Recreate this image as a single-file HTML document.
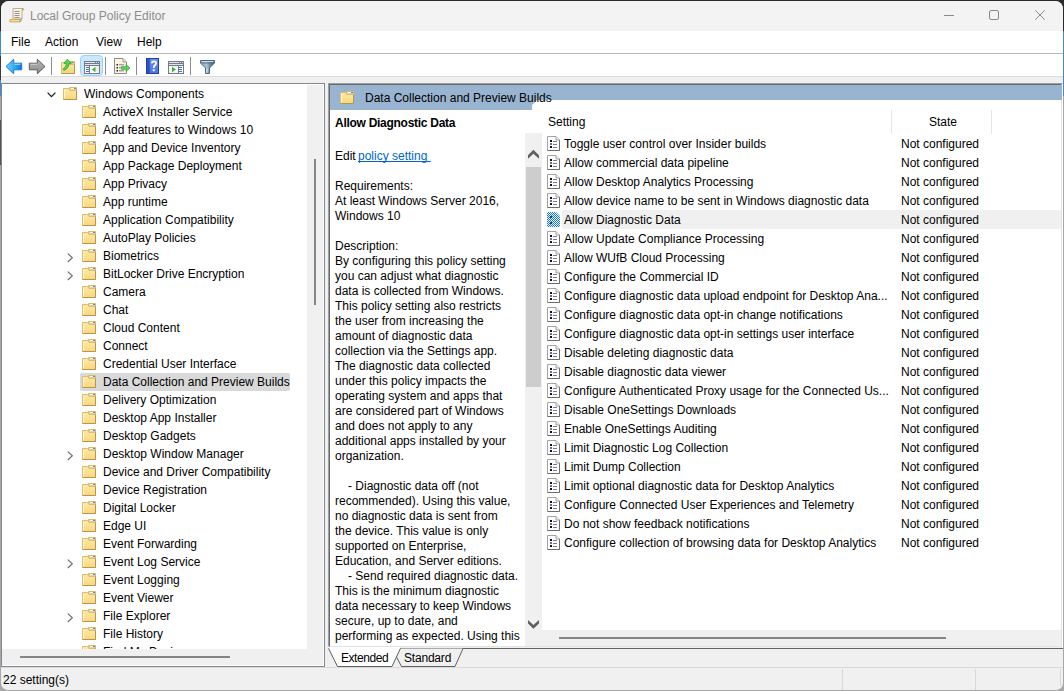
<!DOCTYPE html>
<html><head><meta charset="utf-8"><style>
*{margin:0;padding:0;box-sizing:border-box}
html,body{width:1064px;height:691px;overflow:hidden;background:#a8a8a8}
body{position:relative;font-family:"Liberation Sans",sans-serif;font-size:12px;color:#000}
.a{position:absolute}
.ic{position:absolute;display:block}
.ic svg{display:block}
.t{position:absolute;white-space:pre;line-height:18px;height:18px}
.sel{position:absolute;background:#d9d9d9;border-radius:2px}
.hl{position:absolute;background:#f0f0f0}
#win{position:absolute;left:1px;top:1px;width:1062px;height:689px;background:#f0f0f0;border-radius:8px 8px 7px 7px}
</style></head><body>
<div class="a" style="left:0;top:0;width:1064px;height:31px;background:#2b2b2b"></div>
<div class="a" style="left:0;top:31px;width:1px;height:25px;background:#3d8ad6"></div>
<div class="a" style="left:0;top:56px;width:1px;height:24px;background:#3a3a3a"></div>
<div class="a" style="left:0;top:80px;width:1px;height:16px;background:#3d8ad6"></div>
<div class="a" style="left:0;top:120px;width:1px;height:45px;background:#555"></div>
<div class="a" style="left:1063px;top:31px;width:1px;height:65px;background:#3d8ad6"></div>
<div id="win">
</div>
<!-- title bar -->
<div class="a" style="left:1px;top:1px;width:1062px;height:30px;background:#f3f3f3;border-radius:8px 8px 0 0"></div>
<div class="ic" style="left:9px;top:7px"><svg width="16" height="16" viewBox="0 0 16 16"><path d="M4 1.5H14L13 3V12H4Z" fill="#fdf3cf" stroke="#b8b0a0"/><path d="M13 1.5Q15 1.5 15 2.5Q14.5 3.5 13 3" fill="#e0b85a" stroke="#b89040" stroke-width="0.6"/><rect x="5.5" y="4" width="5" height="1" fill="#8f8fb0"/><rect x="5.5" y="6" width="5" height="1" fill="#8f8fb0"/><rect x="5.5" y="8" width="5" height="1" fill="#8f8fb0"/><rect x="5.5" y="10" width="5" height="1" fill="#8f8fb0"/><path d="M1 12.5H11V15H1Q0.3 13.7 1 12.5Z" fill="#f3d98a" stroke="#c9a55a" stroke-width="0.8"/><path d="M11 12.5Q12 12 12.5 11.5L12.5 13.5L11 15Z" fill="#c8c8d8" stroke="#9090a8" stroke-width="0.6"/></svg></div>
<div class="t" style="left:30px;top:7px;color:#8c8c8c">Local Group Policy Editor</div>
<div class="a" style="left:944px;top:15px;width:10px;height:1px;background:#8a8a8a"></div>
<div class="a" style="left:989px;top:10px;width:10px;height:10px;border:1px solid #8a8a8a;border-radius:2px"></div>
<svg class="ic" style="left:1035px;top:10px" width="10" height="10" viewBox="0 0 10 10"><path d="M0.3 0.3L9.7 9.7M9.7 0.3L0.3 9.7" stroke="#8a8a8a" stroke-width="1"/></svg>
<!-- menu bar -->
<div class="a" style="left:1px;top:31px;width:1062px;height:22px;background:#fff"></div>
<div class="a" style="left:1px;top:53px;width:1062px;height:1px;background:#b8b8b8"></div>
<div class="t" style="left:11px;top:33px">File</div>
<div class="t" style="left:45px;top:33px">Action</div>
<div class="t" style="left:96px;top:33px">View</div>
<div class="t" style="left:137px;top:33px">Help</div>
<!-- toolbar -->
<div class="a" style="left:1px;top:54px;width:1062px;height:22px;background:#fff"></div>
<div class="a" style="left:1px;top:76px;width:1062px;height:1px;background:#dcdcdc"></div>

<!-- back -->
<svg class="ic" style="left:5px;top:58px" width="18" height="17" viewBox="0 0 18 17"><defs><linearGradient id="bk" x1="0" y1="0" x2="1" y2="0"><stop offset="0" stop-color="#6fd0ff"/><stop offset="0.6" stop-color="#2aa6f0"/><stop offset="1" stop-color="#0a6fd0"/></linearGradient></defs><path d="M1 8.5L8.7 1.2V5.2H16.7V11.8H8.7V15.8Z" fill="url(#bk)" stroke="#2277c9" stroke-width="1"/><path d="M9.5 6.3H15.5" stroke="#9be0ff" stroke-width="1"/></svg>
<!-- forward -->
<svg class="ic" style="left:28px;top:58px" width="18" height="17" viewBox="0 0 18 17"><defs><linearGradient id="fw" x1="0" y1="0" x2="0" y2="1"><stop offset="0" stop-color="#b9b9b9"/><stop offset="1" stop-color="#8a8a8a"/></linearGradient></defs><path d="M17 8.5L9.3 1.2V5.2H1.3V11.8H9.3V15.8Z" fill="url(#fw)" stroke="#5e5e5e" stroke-width="1"/><path d="M2.5 6.3H9" stroke="#cfcfcf" stroke-width="1"/></svg>
<div class="a" style="left:51px;top:57px;width:1px;height:18px;background:#8c8c8c"></div>
<!-- up folder -->
<svg class="ic" style="left:60px;top:58px" width="17" height="17" viewBox="0 0 17 17"><defs><linearGradient id="uf" x1="0" y1="0" x2="0" y2="1"><stop offset="0" stop-color="#fdeaa8"/><stop offset="1" stop-color="#f5d47a"/></linearGradient></defs><path d="M9.5 3.5H14.5V7H9.5Z" fill="#f1d48a" stroke="#d9b96c"/><path d="M11.5 4.5H13.5" stroke="#3f8fe0"/><path d="M1.5 4.5H8L9.5 6.5H14.5V15.5H1.5Z" fill="url(#uf)" stroke="#dcbd70"/><path d="M1.5 15.5H14.5V6.5" fill="none" stroke="#b99548"/><path d="M7.3 1.2L11.4 5.3L9.2 5.6Q8.8 10.2 4.4 12.4L2.9 11.3Q6.3 9.1 6.4 5.5L3.9 5.3Z" fill="#4fd84f" stroke="#2c9e2c" stroke-width="0.8" stroke-linejoin="round"/></svg>
<!-- console tree button (highlighted) -->
<div class="a" style="left:80px;top:55px;width:23px;height:21px;background:#cce8ff;border:1px solid #99d1ff;border-radius:4px"></div>
<svg class="ic" style="left:84px;top:61px" width="16" height="13" viewBox="0 0 16 13" shape-rendering="crispEdges"><rect width="16" height="13" fill="#737b89"/><rect x="1" y="1" width="10" height="1" fill="#e3e7ee"/><rect x="12" y="1" width="1" height="1" fill="#e3e7ee"/><rect x="14" y="1" width="1" height="1" fill="#e3e7ee"/><rect x="1" y="3" width="14" height="1" fill="#dfe3ea"/><rect x="1" y="5" width="4" height="7" fill="#fbfbfb"/><rect x="6" y="5" width="9" height="7" fill="#fdfdfd"/><rect x="12" y="5" width="3" height="7" fill="#eeeeee"/><rect x="2" y="6" width="3" height="1" fill="#3b78c0"/><rect x="2" y="8" width="3" height="1" fill="#3b78c0"/><rect x="2" y="10" width="3" height="1" fill="#3b78c0"/><path d="M8 8.5L11.5 5.8V11.2Z" fill="#33b233" shape-rendering="auto"/></svg>
<div class="a" style="left:105px;top:57px;width:1px;height:18px;background:#8c8c8c"></div>
<!-- export list -->
<svg class="ic" style="left:114px;top:58px" width="17" height="16" viewBox="0 0 17 16"><path d="M0.5 0.5H9L12.5 4V15.5H0.5Z" fill="#fdf6dc" stroke="#8a8a8a"/><path d="M9 0.5V4H12.5" fill="#e8e8e8" stroke="#9a9a9a"/><rect x="2.5" y="6" width="1.5" height="1.5" fill="#222"/><rect x="2.5" y="9" width="1.5" height="1.5" fill="#222"/><rect x="2.5" y="12" width="1.5" height="1.5" fill="#222"/><rect x="5" y="6.3" width="5" height="1" fill="#7b78a8"/><rect x="5" y="9.3" width="5" height="1" fill="#7b78a8"/><rect x="5" y="12.3" width="5" height="1" fill="#7b78a8"/><path d="M7.5 8.5H12V6.2L16 10L12 13.8V11.5H7.5Z" fill="#5ad05a" stroke="#3aa83a" stroke-width="0.6"/></svg>
<div class="a" style="left:136px;top:57px;width:1px;height:18px;background:#8c8c8c"></div>
<!-- help -->
<svg class="ic" style="left:146px;top:58px" width="13" height="16" viewBox="0 0 13 16"><defs><linearGradient id="hp" x1="0" y1="0" x2="0" y2="1"><stop offset="0" stop-color="#6d93ec"/><stop offset="1" stop-color="#4b74dc"/></linearGradient></defs><rect x="0.5" y="0.5" width="12" height="15" fill="url(#hp)" stroke="#1f3fae"/><rect x="1" y="1" width="2.8" height="14" fill="#2f52bd"/><path d="M5.9 5.3Q6 3.3 8 3.3Q10.2 3.4 10.1 5.3Q10 6.7 8.7 7.5Q7.7 8.2 7.8 10" fill="none" stroke="#fff" stroke-width="1.8"/><rect x="6.8" y="11.3" width="2" height="1.9" fill="#fff"/></svg>
<!-- action pane -->
<svg class="ic" style="left:168px;top:61px" width="16" height="13" viewBox="0 0 16 13" shape-rendering="crispEdges"><rect width="16" height="13" fill="#737b89"/><rect x="1" y="1" width="10" height="1" fill="#e3e7ee"/><rect x="12" y="1" width="1" height="1" fill="#e3e7ee"/><rect x="14" y="1" width="1" height="1" fill="#e3e7ee"/><rect x="1" y="3" width="14" height="1" fill="#dfe3ea"/><rect x="1" y="5" width="9" height="7" fill="#f6f6f6"/><rect x="11" y="5" width="4" height="7" fill="#fdfdfd"/><rect x="11" y="6" width="3" height="1" fill="#3b78c0"/><rect x="11" y="8" width="3" height="1" fill="#3b78c0"/><rect x="11" y="10" width="3" height="1" fill="#3b78c0"/><path d="M4 5.8L7.8 8.5L4 11.2Z" fill="#33b233" shape-rendering="auto"/></svg>
<div class="a" style="left:190px;top:57px;width:1px;height:18px;background:#8c8c8c"></div>
<!-- filter -->
<svg class="ic" style="left:200px;top:60px" width="15" height="14" viewBox="0 0 15 14"><defs><linearGradient id="fl" x1="0" y1="0" x2="1" y2="0"><stop offset="0" stop-color="#8aa6bb"/><stop offset="0.45" stop-color="#a9c3d6"/><stop offset="0.75" stop-color="#5f7a90"/><stop offset="1" stop-color="#4a6378"/></linearGradient></defs><path d="M0.5 0.5H14.5V3L9.5 8V13.5H5.5V8L0.5 3Z" fill="url(#fl)" stroke="#4f687d" stroke-width="1"/><path d="M1.5 1.5H13.5" stroke="#bfe0f5" stroke-width="1"/><path d="M1 3H14" stroke="#5a7388" stroke-width="1"/><path d="M7 8.5V12.5" stroke="#d6eaf7" stroke-width="1"/></svg>

<!-- tree pane -->
<div class="a" style="left:1px;top:83px;width:324px;height:584px;border:1px solid #828790;background:#fff"></div>
<div class="a" style="left:2px;top:84px;width:321px;height:565px;overflow:hidden">
<div class="ic" style="left:61px;top:3px"><svg width="14" height="13" viewBox="0 0 14 13"><defs><linearGradient id="fg" x1="0" y1="0" x2="0" y2="1"><stop offset="0" stop-color="#fdeaa8"/><stop offset="1" stop-color="#f7d77f"/></linearGradient></defs><path d="M6.5 0.5H13.5V4H6.5Z" fill="#f1d48a" stroke="#d9b96c"/><path d="M8 1.5H11" stroke="#fff" stroke-width="1"/><path d="M11 1.5H13" stroke="#3f8fe0" stroke-width="1"/><path d="M0.5 1.5H5.5L7 3.5H13.5V12.5H0.5Z" fill="url(#fg)" stroke="#dcbd70"/><path d="M0.5 12.5H13.5V3.5" fill="none" stroke="#b99548"/><path d="M1.5 3V11.5" stroke="#fff6d0" stroke-width="1"/></svg></div>
<div class="t" style="left:82px;top:1px">Windows Components</div>
<svg class="ic" style="left:45px;top:8px" width="10" height="6" viewBox="0 0 10 6"><path d="M0.6 0.6L4.5 4.6L8.4 0.6" fill="none" stroke="#1a1a1a" stroke-width="1.3"/></svg>
<div class="ic" style="left:80px;top:21px"><svg width="14" height="13" viewBox="0 0 14 13"><defs><linearGradient id="fg" x1="0" y1="0" x2="0" y2="1"><stop offset="0" stop-color="#fdeaa8"/><stop offset="1" stop-color="#f7d77f"/></linearGradient></defs><path d="M6.5 0.5H13.5V4H6.5Z" fill="#f1d48a" stroke="#d9b96c"/><path d="M8 1.5H11" stroke="#fff" stroke-width="1"/><path d="M11 1.5H13" stroke="#3f8fe0" stroke-width="1"/><path d="M0.5 1.5H5.5L7 3.5H13.5V12.5H0.5Z" fill="url(#fg)" stroke="#dcbd70"/><path d="M0.5 12.5H13.5V3.5" fill="none" stroke="#b99548"/><path d="M1.5 3V11.5" stroke="#fff6d0" stroke-width="1"/></svg></div>
<div class="t" style="left:101px;top:19px">ActiveX Installer Service</div>
<div class="ic" style="left:80px;top:39px"><svg width="14" height="13" viewBox="0 0 14 13"><defs><linearGradient id="fg" x1="0" y1="0" x2="0" y2="1"><stop offset="0" stop-color="#fdeaa8"/><stop offset="1" stop-color="#f7d77f"/></linearGradient></defs><path d="M6.5 0.5H13.5V4H6.5Z" fill="#f1d48a" stroke="#d9b96c"/><path d="M8 1.5H11" stroke="#fff" stroke-width="1"/><path d="M11 1.5H13" stroke="#3f8fe0" stroke-width="1"/><path d="M0.5 1.5H5.5L7 3.5H13.5V12.5H0.5Z" fill="url(#fg)" stroke="#dcbd70"/><path d="M0.5 12.5H13.5V3.5" fill="none" stroke="#b99548"/><path d="M1.5 3V11.5" stroke="#fff6d0" stroke-width="1"/></svg></div>
<div class="t" style="left:101px;top:37px">Add features to Windows 10</div>
<div class="ic" style="left:80px;top:57px"><svg width="14" height="13" viewBox="0 0 14 13"><defs><linearGradient id="fg" x1="0" y1="0" x2="0" y2="1"><stop offset="0" stop-color="#fdeaa8"/><stop offset="1" stop-color="#f7d77f"/></linearGradient></defs><path d="M6.5 0.5H13.5V4H6.5Z" fill="#f1d48a" stroke="#d9b96c"/><path d="M8 1.5H11" stroke="#fff" stroke-width="1"/><path d="M11 1.5H13" stroke="#3f8fe0" stroke-width="1"/><path d="M0.5 1.5H5.5L7 3.5H13.5V12.5H0.5Z" fill="url(#fg)" stroke="#dcbd70"/><path d="M0.5 12.5H13.5V3.5" fill="none" stroke="#b99548"/><path d="M1.5 3V11.5" stroke="#fff6d0" stroke-width="1"/></svg></div>
<div class="t" style="left:101px;top:55px">App and Device Inventory</div>
<div class="ic" style="left:80px;top:75px"><svg width="14" height="13" viewBox="0 0 14 13"><defs><linearGradient id="fg" x1="0" y1="0" x2="0" y2="1"><stop offset="0" stop-color="#fdeaa8"/><stop offset="1" stop-color="#f7d77f"/></linearGradient></defs><path d="M6.5 0.5H13.5V4H6.5Z" fill="#f1d48a" stroke="#d9b96c"/><path d="M8 1.5H11" stroke="#fff" stroke-width="1"/><path d="M11 1.5H13" stroke="#3f8fe0" stroke-width="1"/><path d="M0.5 1.5H5.5L7 3.5H13.5V12.5H0.5Z" fill="url(#fg)" stroke="#dcbd70"/><path d="M0.5 12.5H13.5V3.5" fill="none" stroke="#b99548"/><path d="M1.5 3V11.5" stroke="#fff6d0" stroke-width="1"/></svg></div>
<div class="t" style="left:101px;top:73px">App Package Deployment</div>
<div class="ic" style="left:80px;top:93px"><svg width="14" height="13" viewBox="0 0 14 13"><defs><linearGradient id="fg" x1="0" y1="0" x2="0" y2="1"><stop offset="0" stop-color="#fdeaa8"/><stop offset="1" stop-color="#f7d77f"/></linearGradient></defs><path d="M6.5 0.5H13.5V4H6.5Z" fill="#f1d48a" stroke="#d9b96c"/><path d="M8 1.5H11" stroke="#fff" stroke-width="1"/><path d="M11 1.5H13" stroke="#3f8fe0" stroke-width="1"/><path d="M0.5 1.5H5.5L7 3.5H13.5V12.5H0.5Z" fill="url(#fg)" stroke="#dcbd70"/><path d="M0.5 12.5H13.5V3.5" fill="none" stroke="#b99548"/><path d="M1.5 3V11.5" stroke="#fff6d0" stroke-width="1"/></svg></div>
<div class="t" style="left:101px;top:91px">App Privacy</div>
<div class="ic" style="left:80px;top:111px"><svg width="14" height="13" viewBox="0 0 14 13"><defs><linearGradient id="fg" x1="0" y1="0" x2="0" y2="1"><stop offset="0" stop-color="#fdeaa8"/><stop offset="1" stop-color="#f7d77f"/></linearGradient></defs><path d="M6.5 0.5H13.5V4H6.5Z" fill="#f1d48a" stroke="#d9b96c"/><path d="M8 1.5H11" stroke="#fff" stroke-width="1"/><path d="M11 1.5H13" stroke="#3f8fe0" stroke-width="1"/><path d="M0.5 1.5H5.5L7 3.5H13.5V12.5H0.5Z" fill="url(#fg)" stroke="#dcbd70"/><path d="M0.5 12.5H13.5V3.5" fill="none" stroke="#b99548"/><path d="M1.5 3V11.5" stroke="#fff6d0" stroke-width="1"/></svg></div>
<div class="t" style="left:101px;top:109px">App runtime</div>
<div class="ic" style="left:80px;top:129px"><svg width="14" height="13" viewBox="0 0 14 13"><defs><linearGradient id="fg" x1="0" y1="0" x2="0" y2="1"><stop offset="0" stop-color="#fdeaa8"/><stop offset="1" stop-color="#f7d77f"/></linearGradient></defs><path d="M6.5 0.5H13.5V4H6.5Z" fill="#f1d48a" stroke="#d9b96c"/><path d="M8 1.5H11" stroke="#fff" stroke-width="1"/><path d="M11 1.5H13" stroke="#3f8fe0" stroke-width="1"/><path d="M0.5 1.5H5.5L7 3.5H13.5V12.5H0.5Z" fill="url(#fg)" stroke="#dcbd70"/><path d="M0.5 12.5H13.5V3.5" fill="none" stroke="#b99548"/><path d="M1.5 3V11.5" stroke="#fff6d0" stroke-width="1"/></svg></div>
<div class="t" style="left:101px;top:127px">Application Compatibility</div>
<div class="ic" style="left:80px;top:147px"><svg width="14" height="13" viewBox="0 0 14 13"><defs><linearGradient id="fg" x1="0" y1="0" x2="0" y2="1"><stop offset="0" stop-color="#fdeaa8"/><stop offset="1" stop-color="#f7d77f"/></linearGradient></defs><path d="M6.5 0.5H13.5V4H6.5Z" fill="#f1d48a" stroke="#d9b96c"/><path d="M8 1.5H11" stroke="#fff" stroke-width="1"/><path d="M11 1.5H13" stroke="#3f8fe0" stroke-width="1"/><path d="M0.5 1.5H5.5L7 3.5H13.5V12.5H0.5Z" fill="url(#fg)" stroke="#dcbd70"/><path d="M0.5 12.5H13.5V3.5" fill="none" stroke="#b99548"/><path d="M1.5 3V11.5" stroke="#fff6d0" stroke-width="1"/></svg></div>
<div class="t" style="left:101px;top:145px">AutoPlay Policies</div>
<div class="ic" style="left:80px;top:165px"><svg width="14" height="13" viewBox="0 0 14 13"><defs><linearGradient id="fg" x1="0" y1="0" x2="0" y2="1"><stop offset="0" stop-color="#fdeaa8"/><stop offset="1" stop-color="#f7d77f"/></linearGradient></defs><path d="M6.5 0.5H13.5V4H6.5Z" fill="#f1d48a" stroke="#d9b96c"/><path d="M8 1.5H11" stroke="#fff" stroke-width="1"/><path d="M11 1.5H13" stroke="#3f8fe0" stroke-width="1"/><path d="M0.5 1.5H5.5L7 3.5H13.5V12.5H0.5Z" fill="url(#fg)" stroke="#dcbd70"/><path d="M0.5 12.5H13.5V3.5" fill="none" stroke="#b99548"/><path d="M1.5 3V11.5" stroke="#fff6d0" stroke-width="1"/></svg></div>
<div class="t" style="left:101px;top:163px">Biometrics</div>
<svg class="ic" style="left:65px;top:169px" width="7" height="10" viewBox="0 0 7 10"><path d="M0.8 0.6L5.3 4.8L0.8 9" fill="none" stroke="#707070" stroke-width="1.2"/></svg>
<div class="ic" style="left:80px;top:183px"><svg width="14" height="13" viewBox="0 0 14 13"><defs><linearGradient id="fg" x1="0" y1="0" x2="0" y2="1"><stop offset="0" stop-color="#fdeaa8"/><stop offset="1" stop-color="#f7d77f"/></linearGradient></defs><path d="M6.5 0.5H13.5V4H6.5Z" fill="#f1d48a" stroke="#d9b96c"/><path d="M8 1.5H11" stroke="#fff" stroke-width="1"/><path d="M11 1.5H13" stroke="#3f8fe0" stroke-width="1"/><path d="M0.5 1.5H5.5L7 3.5H13.5V12.5H0.5Z" fill="url(#fg)" stroke="#dcbd70"/><path d="M0.5 12.5H13.5V3.5" fill="none" stroke="#b99548"/><path d="M1.5 3V11.5" stroke="#fff6d0" stroke-width="1"/></svg></div>
<div class="t" style="left:101px;top:181px">BitLocker Drive Encryption</div>
<svg class="ic" style="left:65px;top:187px" width="7" height="10" viewBox="0 0 7 10"><path d="M0.8 0.6L5.3 4.8L0.8 9" fill="none" stroke="#707070" stroke-width="1.2"/></svg>
<div class="ic" style="left:80px;top:201px"><svg width="14" height="13" viewBox="0 0 14 13"><defs><linearGradient id="fg" x1="0" y1="0" x2="0" y2="1"><stop offset="0" stop-color="#fdeaa8"/><stop offset="1" stop-color="#f7d77f"/></linearGradient></defs><path d="M6.5 0.5H13.5V4H6.5Z" fill="#f1d48a" stroke="#d9b96c"/><path d="M8 1.5H11" stroke="#fff" stroke-width="1"/><path d="M11 1.5H13" stroke="#3f8fe0" stroke-width="1"/><path d="M0.5 1.5H5.5L7 3.5H13.5V12.5H0.5Z" fill="url(#fg)" stroke="#dcbd70"/><path d="M0.5 12.5H13.5V3.5" fill="none" stroke="#b99548"/><path d="M1.5 3V11.5" stroke="#fff6d0" stroke-width="1"/></svg></div>
<div class="t" style="left:101px;top:199px">Camera</div>
<div class="ic" style="left:80px;top:219px"><svg width="14" height="13" viewBox="0 0 14 13"><defs><linearGradient id="fg" x1="0" y1="0" x2="0" y2="1"><stop offset="0" stop-color="#fdeaa8"/><stop offset="1" stop-color="#f7d77f"/></linearGradient></defs><path d="M6.5 0.5H13.5V4H6.5Z" fill="#f1d48a" stroke="#d9b96c"/><path d="M8 1.5H11" stroke="#fff" stroke-width="1"/><path d="M11 1.5H13" stroke="#3f8fe0" stroke-width="1"/><path d="M0.5 1.5H5.5L7 3.5H13.5V12.5H0.5Z" fill="url(#fg)" stroke="#dcbd70"/><path d="M0.5 12.5H13.5V3.5" fill="none" stroke="#b99548"/><path d="M1.5 3V11.5" stroke="#fff6d0" stroke-width="1"/></svg></div>
<div class="t" style="left:101px;top:217px">Chat</div>
<div class="ic" style="left:80px;top:237px"><svg width="14" height="13" viewBox="0 0 14 13"><defs><linearGradient id="fg" x1="0" y1="0" x2="0" y2="1"><stop offset="0" stop-color="#fdeaa8"/><stop offset="1" stop-color="#f7d77f"/></linearGradient></defs><path d="M6.5 0.5H13.5V4H6.5Z" fill="#f1d48a" stroke="#d9b96c"/><path d="M8 1.5H11" stroke="#fff" stroke-width="1"/><path d="M11 1.5H13" stroke="#3f8fe0" stroke-width="1"/><path d="M0.5 1.5H5.5L7 3.5H13.5V12.5H0.5Z" fill="url(#fg)" stroke="#dcbd70"/><path d="M0.5 12.5H13.5V3.5" fill="none" stroke="#b99548"/><path d="M1.5 3V11.5" stroke="#fff6d0" stroke-width="1"/></svg></div>
<div class="t" style="left:101px;top:235px">Cloud Content</div>
<div class="ic" style="left:80px;top:255px"><svg width="14" height="13" viewBox="0 0 14 13"><defs><linearGradient id="fg" x1="0" y1="0" x2="0" y2="1"><stop offset="0" stop-color="#fdeaa8"/><stop offset="1" stop-color="#f7d77f"/></linearGradient></defs><path d="M6.5 0.5H13.5V4H6.5Z" fill="#f1d48a" stroke="#d9b96c"/><path d="M8 1.5H11" stroke="#fff" stroke-width="1"/><path d="M11 1.5H13" stroke="#3f8fe0" stroke-width="1"/><path d="M0.5 1.5H5.5L7 3.5H13.5V12.5H0.5Z" fill="url(#fg)" stroke="#dcbd70"/><path d="M0.5 12.5H13.5V3.5" fill="none" stroke="#b99548"/><path d="M1.5 3V11.5" stroke="#fff6d0" stroke-width="1"/></svg></div>
<div class="t" style="left:101px;top:253px">Connect</div>
<div class="ic" style="left:80px;top:273px"><svg width="14" height="13" viewBox="0 0 14 13"><defs><linearGradient id="fg" x1="0" y1="0" x2="0" y2="1"><stop offset="0" stop-color="#fdeaa8"/><stop offset="1" stop-color="#f7d77f"/></linearGradient></defs><path d="M6.5 0.5H13.5V4H6.5Z" fill="#f1d48a" stroke="#d9b96c"/><path d="M8 1.5H11" stroke="#fff" stroke-width="1"/><path d="M11 1.5H13" stroke="#3f8fe0" stroke-width="1"/><path d="M0.5 1.5H5.5L7 3.5H13.5V12.5H0.5Z" fill="url(#fg)" stroke="#dcbd70"/><path d="M0.5 12.5H13.5V3.5" fill="none" stroke="#b99548"/><path d="M1.5 3V11.5" stroke="#fff6d0" stroke-width="1"/></svg></div>
<div class="t" style="left:101px;top:271px">Credential User Interface</div>
<div class="sel" style="left:78px;top:289px;width:210px;height:18px"></div>
<div class="ic" style="left:80px;top:291px"><svg width="14" height="13" viewBox="0 0 14 13"><defs><linearGradient id="fg" x1="0" y1="0" x2="0" y2="1"><stop offset="0" stop-color="#fdeaa8"/><stop offset="1" stop-color="#f7d77f"/></linearGradient></defs><path d="M6.5 0.5H13.5V4H6.5Z" fill="#f1d48a" stroke="#d9b96c"/><path d="M8 1.5H11" stroke="#fff" stroke-width="1"/><path d="M11 1.5H13" stroke="#3f8fe0" stroke-width="1"/><path d="M0.5 1.5H5.5L7 3.5H13.5V12.5H0.5Z" fill="url(#fg)" stroke="#dcbd70"/><path d="M0.5 12.5H13.5V3.5" fill="none" stroke="#b99548"/><path d="M1.5 3V11.5" stroke="#fff6d0" stroke-width="1"/></svg></div>
<div class="t" style="left:101px;top:289px">Data Collection and Preview Builds</div>
<div class="ic" style="left:80px;top:309px"><svg width="14" height="13" viewBox="0 0 14 13"><defs><linearGradient id="fg" x1="0" y1="0" x2="0" y2="1"><stop offset="0" stop-color="#fdeaa8"/><stop offset="1" stop-color="#f7d77f"/></linearGradient></defs><path d="M6.5 0.5H13.5V4H6.5Z" fill="#f1d48a" stroke="#d9b96c"/><path d="M8 1.5H11" stroke="#fff" stroke-width="1"/><path d="M11 1.5H13" stroke="#3f8fe0" stroke-width="1"/><path d="M0.5 1.5H5.5L7 3.5H13.5V12.5H0.5Z" fill="url(#fg)" stroke="#dcbd70"/><path d="M0.5 12.5H13.5V3.5" fill="none" stroke="#b99548"/><path d="M1.5 3V11.5" stroke="#fff6d0" stroke-width="1"/></svg></div>
<div class="t" style="left:101px;top:307px">Delivery Optimization</div>
<div class="ic" style="left:80px;top:327px"><svg width="14" height="13" viewBox="0 0 14 13"><defs><linearGradient id="fg" x1="0" y1="0" x2="0" y2="1"><stop offset="0" stop-color="#fdeaa8"/><stop offset="1" stop-color="#f7d77f"/></linearGradient></defs><path d="M6.5 0.5H13.5V4H6.5Z" fill="#f1d48a" stroke="#d9b96c"/><path d="M8 1.5H11" stroke="#fff" stroke-width="1"/><path d="M11 1.5H13" stroke="#3f8fe0" stroke-width="1"/><path d="M0.5 1.5H5.5L7 3.5H13.5V12.5H0.5Z" fill="url(#fg)" stroke="#dcbd70"/><path d="M0.5 12.5H13.5V3.5" fill="none" stroke="#b99548"/><path d="M1.5 3V11.5" stroke="#fff6d0" stroke-width="1"/></svg></div>
<div class="t" style="left:101px;top:325px">Desktop App Installer</div>
<div class="ic" style="left:80px;top:345px"><svg width="14" height="13" viewBox="0 0 14 13"><defs><linearGradient id="fg" x1="0" y1="0" x2="0" y2="1"><stop offset="0" stop-color="#fdeaa8"/><stop offset="1" stop-color="#f7d77f"/></linearGradient></defs><path d="M6.5 0.5H13.5V4H6.5Z" fill="#f1d48a" stroke="#d9b96c"/><path d="M8 1.5H11" stroke="#fff" stroke-width="1"/><path d="M11 1.5H13" stroke="#3f8fe0" stroke-width="1"/><path d="M0.5 1.5H5.5L7 3.5H13.5V12.5H0.5Z" fill="url(#fg)" stroke="#dcbd70"/><path d="M0.5 12.5H13.5V3.5" fill="none" stroke="#b99548"/><path d="M1.5 3V11.5" stroke="#fff6d0" stroke-width="1"/></svg></div>
<div class="t" style="left:101px;top:343px">Desktop Gadgets</div>
<div class="ic" style="left:80px;top:363px"><svg width="14" height="13" viewBox="0 0 14 13"><defs><linearGradient id="fg" x1="0" y1="0" x2="0" y2="1"><stop offset="0" stop-color="#fdeaa8"/><stop offset="1" stop-color="#f7d77f"/></linearGradient></defs><path d="M6.5 0.5H13.5V4H6.5Z" fill="#f1d48a" stroke="#d9b96c"/><path d="M8 1.5H11" stroke="#fff" stroke-width="1"/><path d="M11 1.5H13" stroke="#3f8fe0" stroke-width="1"/><path d="M0.5 1.5H5.5L7 3.5H13.5V12.5H0.5Z" fill="url(#fg)" stroke="#dcbd70"/><path d="M0.5 12.5H13.5V3.5" fill="none" stroke="#b99548"/><path d="M1.5 3V11.5" stroke="#fff6d0" stroke-width="1"/></svg></div>
<div class="t" style="left:101px;top:361px">Desktop Window Manager</div>
<svg class="ic" style="left:65px;top:367px" width="7" height="10" viewBox="0 0 7 10"><path d="M0.8 0.6L5.3 4.8L0.8 9" fill="none" stroke="#707070" stroke-width="1.2"/></svg>
<div class="ic" style="left:80px;top:381px"><svg width="14" height="13" viewBox="0 0 14 13"><defs><linearGradient id="fg" x1="0" y1="0" x2="0" y2="1"><stop offset="0" stop-color="#fdeaa8"/><stop offset="1" stop-color="#f7d77f"/></linearGradient></defs><path d="M6.5 0.5H13.5V4H6.5Z" fill="#f1d48a" stroke="#d9b96c"/><path d="M8 1.5H11" stroke="#fff" stroke-width="1"/><path d="M11 1.5H13" stroke="#3f8fe0" stroke-width="1"/><path d="M0.5 1.5H5.5L7 3.5H13.5V12.5H0.5Z" fill="url(#fg)" stroke="#dcbd70"/><path d="M0.5 12.5H13.5V3.5" fill="none" stroke="#b99548"/><path d="M1.5 3V11.5" stroke="#fff6d0" stroke-width="1"/></svg></div>
<div class="t" style="left:101px;top:379px">Device and Driver Compatibility</div>
<div class="ic" style="left:80px;top:399px"><svg width="14" height="13" viewBox="0 0 14 13"><defs><linearGradient id="fg" x1="0" y1="0" x2="0" y2="1"><stop offset="0" stop-color="#fdeaa8"/><stop offset="1" stop-color="#f7d77f"/></linearGradient></defs><path d="M6.5 0.5H13.5V4H6.5Z" fill="#f1d48a" stroke="#d9b96c"/><path d="M8 1.5H11" stroke="#fff" stroke-width="1"/><path d="M11 1.5H13" stroke="#3f8fe0" stroke-width="1"/><path d="M0.5 1.5H5.5L7 3.5H13.5V12.5H0.5Z" fill="url(#fg)" stroke="#dcbd70"/><path d="M0.5 12.5H13.5V3.5" fill="none" stroke="#b99548"/><path d="M1.5 3V11.5" stroke="#fff6d0" stroke-width="1"/></svg></div>
<div class="t" style="left:101px;top:397px">Device Registration</div>
<div class="ic" style="left:80px;top:417px"><svg width="14" height="13" viewBox="0 0 14 13"><defs><linearGradient id="fg" x1="0" y1="0" x2="0" y2="1"><stop offset="0" stop-color="#fdeaa8"/><stop offset="1" stop-color="#f7d77f"/></linearGradient></defs><path d="M6.5 0.5H13.5V4H6.5Z" fill="#f1d48a" stroke="#d9b96c"/><path d="M8 1.5H11" stroke="#fff" stroke-width="1"/><path d="M11 1.5H13" stroke="#3f8fe0" stroke-width="1"/><path d="M0.5 1.5H5.5L7 3.5H13.5V12.5H0.5Z" fill="url(#fg)" stroke="#dcbd70"/><path d="M0.5 12.5H13.5V3.5" fill="none" stroke="#b99548"/><path d="M1.5 3V11.5" stroke="#fff6d0" stroke-width="1"/></svg></div>
<div class="t" style="left:101px;top:415px">Digital Locker</div>
<div class="ic" style="left:80px;top:435px"><svg width="14" height="13" viewBox="0 0 14 13"><defs><linearGradient id="fg" x1="0" y1="0" x2="0" y2="1"><stop offset="0" stop-color="#fdeaa8"/><stop offset="1" stop-color="#f7d77f"/></linearGradient></defs><path d="M6.5 0.5H13.5V4H6.5Z" fill="#f1d48a" stroke="#d9b96c"/><path d="M8 1.5H11" stroke="#fff" stroke-width="1"/><path d="M11 1.5H13" stroke="#3f8fe0" stroke-width="1"/><path d="M0.5 1.5H5.5L7 3.5H13.5V12.5H0.5Z" fill="url(#fg)" stroke="#dcbd70"/><path d="M0.5 12.5H13.5V3.5" fill="none" stroke="#b99548"/><path d="M1.5 3V11.5" stroke="#fff6d0" stroke-width="1"/></svg></div>
<div class="t" style="left:101px;top:433px">Edge UI</div>
<div class="ic" style="left:80px;top:453px"><svg width="14" height="13" viewBox="0 0 14 13"><defs><linearGradient id="fg" x1="0" y1="0" x2="0" y2="1"><stop offset="0" stop-color="#fdeaa8"/><stop offset="1" stop-color="#f7d77f"/></linearGradient></defs><path d="M6.5 0.5H13.5V4H6.5Z" fill="#f1d48a" stroke="#d9b96c"/><path d="M8 1.5H11" stroke="#fff" stroke-width="1"/><path d="M11 1.5H13" stroke="#3f8fe0" stroke-width="1"/><path d="M0.5 1.5H5.5L7 3.5H13.5V12.5H0.5Z" fill="url(#fg)" stroke="#dcbd70"/><path d="M0.5 12.5H13.5V3.5" fill="none" stroke="#b99548"/><path d="M1.5 3V11.5" stroke="#fff6d0" stroke-width="1"/></svg></div>
<div class="t" style="left:101px;top:451px">Event Forwarding</div>
<div class="ic" style="left:80px;top:471px"><svg width="14" height="13" viewBox="0 0 14 13"><defs><linearGradient id="fg" x1="0" y1="0" x2="0" y2="1"><stop offset="0" stop-color="#fdeaa8"/><stop offset="1" stop-color="#f7d77f"/></linearGradient></defs><path d="M6.5 0.5H13.5V4H6.5Z" fill="#f1d48a" stroke="#d9b96c"/><path d="M8 1.5H11" stroke="#fff" stroke-width="1"/><path d="M11 1.5H13" stroke="#3f8fe0" stroke-width="1"/><path d="M0.5 1.5H5.5L7 3.5H13.5V12.5H0.5Z" fill="url(#fg)" stroke="#dcbd70"/><path d="M0.5 12.5H13.5V3.5" fill="none" stroke="#b99548"/><path d="M1.5 3V11.5" stroke="#fff6d0" stroke-width="1"/></svg></div>
<div class="t" style="left:101px;top:469px">Event Log Service</div>
<svg class="ic" style="left:65px;top:475px" width="7" height="10" viewBox="0 0 7 10"><path d="M0.8 0.6L5.3 4.8L0.8 9" fill="none" stroke="#707070" stroke-width="1.2"/></svg>
<div class="ic" style="left:80px;top:489px"><svg width="14" height="13" viewBox="0 0 14 13"><defs><linearGradient id="fg" x1="0" y1="0" x2="0" y2="1"><stop offset="0" stop-color="#fdeaa8"/><stop offset="1" stop-color="#f7d77f"/></linearGradient></defs><path d="M6.5 0.5H13.5V4H6.5Z" fill="#f1d48a" stroke="#d9b96c"/><path d="M8 1.5H11" stroke="#fff" stroke-width="1"/><path d="M11 1.5H13" stroke="#3f8fe0" stroke-width="1"/><path d="M0.5 1.5H5.5L7 3.5H13.5V12.5H0.5Z" fill="url(#fg)" stroke="#dcbd70"/><path d="M0.5 12.5H13.5V3.5" fill="none" stroke="#b99548"/><path d="M1.5 3V11.5" stroke="#fff6d0" stroke-width="1"/></svg></div>
<div class="t" style="left:101px;top:487px">Event Logging</div>
<div class="ic" style="left:80px;top:507px"><svg width="14" height="13" viewBox="0 0 14 13"><defs><linearGradient id="fg" x1="0" y1="0" x2="0" y2="1"><stop offset="0" stop-color="#fdeaa8"/><stop offset="1" stop-color="#f7d77f"/></linearGradient></defs><path d="M6.5 0.5H13.5V4H6.5Z" fill="#f1d48a" stroke="#d9b96c"/><path d="M8 1.5H11" stroke="#fff" stroke-width="1"/><path d="M11 1.5H13" stroke="#3f8fe0" stroke-width="1"/><path d="M0.5 1.5H5.5L7 3.5H13.5V12.5H0.5Z" fill="url(#fg)" stroke="#dcbd70"/><path d="M0.5 12.5H13.5V3.5" fill="none" stroke="#b99548"/><path d="M1.5 3V11.5" stroke="#fff6d0" stroke-width="1"/></svg></div>
<div class="t" style="left:101px;top:505px">Event Viewer</div>
<div class="ic" style="left:80px;top:525px"><svg width="14" height="13" viewBox="0 0 14 13"><defs><linearGradient id="fg" x1="0" y1="0" x2="0" y2="1"><stop offset="0" stop-color="#fdeaa8"/><stop offset="1" stop-color="#f7d77f"/></linearGradient></defs><path d="M6.5 0.5H13.5V4H6.5Z" fill="#f1d48a" stroke="#d9b96c"/><path d="M8 1.5H11" stroke="#fff" stroke-width="1"/><path d="M11 1.5H13" stroke="#3f8fe0" stroke-width="1"/><path d="M0.5 1.5H5.5L7 3.5H13.5V12.5H0.5Z" fill="url(#fg)" stroke="#dcbd70"/><path d="M0.5 12.5H13.5V3.5" fill="none" stroke="#b99548"/><path d="M1.5 3V11.5" stroke="#fff6d0" stroke-width="1"/></svg></div>
<div class="t" style="left:101px;top:523px">File Explorer</div>
<svg class="ic" style="left:65px;top:529px" width="7" height="10" viewBox="0 0 7 10"><path d="M0.8 0.6L5.3 4.8L0.8 9" fill="none" stroke="#707070" stroke-width="1.2"/></svg>
<div class="ic" style="left:80px;top:543px"><svg width="14" height="13" viewBox="0 0 14 13"><defs><linearGradient id="fg" x1="0" y1="0" x2="0" y2="1"><stop offset="0" stop-color="#fdeaa8"/><stop offset="1" stop-color="#f7d77f"/></linearGradient></defs><path d="M6.5 0.5H13.5V4H6.5Z" fill="#f1d48a" stroke="#d9b96c"/><path d="M8 1.5H11" stroke="#fff" stroke-width="1"/><path d="M11 1.5H13" stroke="#3f8fe0" stroke-width="1"/><path d="M0.5 1.5H5.5L7 3.5H13.5V12.5H0.5Z" fill="url(#fg)" stroke="#dcbd70"/><path d="M0.5 12.5H13.5V3.5" fill="none" stroke="#b99548"/><path d="M1.5 3V11.5" stroke="#fff6d0" stroke-width="1"/></svg></div>
<div class="t" style="left:101px;top:541px">File History</div>
<div class="ic" style="left:80px;top:561px"><svg width="14" height="13" viewBox="0 0 14 13"><defs><linearGradient id="fg" x1="0" y1="0" x2="0" y2="1"><stop offset="0" stop-color="#fdeaa8"/><stop offset="1" stop-color="#f7d77f"/></linearGradient></defs><path d="M6.5 0.5H13.5V4H6.5Z" fill="#f1d48a" stroke="#d9b96c"/><path d="M8 1.5H11" stroke="#fff" stroke-width="1"/><path d="M11 1.5H13" stroke="#3f8fe0" stroke-width="1"/><path d="M0.5 1.5H5.5L7 3.5H13.5V12.5H0.5Z" fill="url(#fg)" stroke="#dcbd70"/><path d="M0.5 12.5H13.5V3.5" fill="none" stroke="#b99548"/><path d="M1.5 3V11.5" stroke="#fff6d0" stroke-width="1"/></svg></div>
<div class="t" style="left:101px;top:559px">Find My Device</div>
</div>
<div class="a" style="left:307px;top:85px;width:16px;height:564px;background:#f0f0f0"></div>
<div class="a" style="left:314px;top:159px;width:2px;height:146px;background:#858585"></div>
<div class="a" style="left:2px;top:649px;width:321px;height:16px;background:#f0f0f0"></div>
<div class="a" style="left:20px;top:656px;width:210px;height:2px;background:#858585"></div>
<!-- right pane -->
<div class="a" style="left:328px;top:83px;width:735px;height:564px;border-left:1px solid #a0a0a0;border-top:1px solid #a0a0a0;border-right:1px solid #fff;border-bottom:1px solid #fff;background:#fff"></div>
<div class="a" style="left:329px;top:84px;width:733px;height:563px;border-left:1px solid #696969;border-top:1px solid #696969;border-right:1px solid #e3e3e3;border-bottom:1px solid #e3e3e3;background:#fff"></div>
<div class="a" style="left:330px;top:85px;width:732px;height:15px;background:#99b4d1"></div>
<svg class="ic" style="left:330px;top:100px" width="210" height="10" viewBox="0 0 210 10"><path d="M0 0H207L202 5V10H0Z" fill="#99b4d1"/></svg>
<div class="ic" style="left:340px;top:91px"><svg width="14" height="13" viewBox="0 0 14 13"><defs><linearGradient id="fg" x1="0" y1="0" x2="0" y2="1"><stop offset="0" stop-color="#fdeaa8"/><stop offset="1" stop-color="#f7d77f"/></linearGradient></defs><path d="M6.5 0.5H13.5V4H6.5Z" fill="#f1d48a" stroke="#d9b96c"/><path d="M8 1.5H11" stroke="#fff" stroke-width="1"/><path d="M11 1.5H13" stroke="#3f8fe0" stroke-width="1"/><path d="M0.5 1.5H5.5L7 3.5H13.5V12.5H0.5Z" fill="url(#fg)" stroke="#dcbd70"/><path d="M0.5 12.5H13.5V3.5" fill="none" stroke="#b99548"/><path d="M1.5 3V11.5" stroke="#fff6d0" stroke-width="1"/></svg></div>
<div class="t" style="left:365px;top:89px">Data Collection and Preview Builds</div>
<!-- description -->
<div class="t" style="left:335px;top:114px;font-weight:bold;letter-spacing:-0.28px">Allow Diagnostic Data</div>
<div class="t" style="left:335px;top:147px">Edit</div><div class="t" style="left:358px;top:147px;color:#0066cc;text-decoration:underline;text-decoration-skip-ink:none">policy setting </div>
<div class="t" style="left:335px;top:177px">Requirements:</div>
<div class="t" style="left:335px;top:192px">At least Windows Server 2016,</div>
<div class="t" style="left:335px;top:207px">Windows 10</div>
<div class="t" style="left:335px;top:237px">Description:</div>
<div class="t" style="left:335px;top:252px">By configuring this policy setting</div>
<div class="t" style="left:335px;top:267px">you can adjust what diagnostic</div>
<div class="t" style="left:335px;top:282px">data is collected from Windows.</div>
<div class="t" style="left:335px;top:297px">This policy setting also restricts</div>
<div class="t" style="left:335px;top:312px">the user from increasing the</div>
<div class="t" style="left:335px;top:327px">amount of diagnostic data</div>
<div class="t" style="left:335px;top:342px">collection via the Settings app.</div>
<div class="t" style="left:335px;top:357px">The diagnostic data collected</div>
<div class="t" style="left:335px;top:372px">under this policy impacts the</div>
<div class="t" style="left:335px;top:387px">operating system and apps that</div>
<div class="t" style="left:335px;top:402px">are considered part of Windows</div>
<div class="t" style="left:335px;top:417px">and does not apply to any</div>
<div class="t" style="left:335px;top:432px">additional apps installed by your</div>
<div class="t" style="left:335px;top:447px">organization.</div>
<div class="t" style="left:335px;top:477px"><span style="padding-left:13px"></span>- Diagnostic data off (not</div>
<div class="t" style="left:335px;top:492px">recommended). Using this value,</div>
<div class="t" style="left:335px;top:507px">no diagnostic data is sent from</div>
<div class="t" style="left:335px;top:522px">the device. This value is only</div>
<div class="t" style="left:335px;top:537px">supported on Enterprise,</div>
<div class="t" style="left:335px;top:552px">Education, and Server editions.</div>
<div class="t" style="left:335px;top:567px"><span style="padding-left:13px"></span>- Send required diagnostic data.</div>
<div class="t" style="left:335px;top:582px">This is the minimum diagnostic</div>
<div class="t" style="left:335px;top:597px">data necessary to keep Windows</div>
<div class="t" style="left:335px;top:612px">secure, up to date, and</div>
<div class="t" style="left:335px;top:627px">performing as expected. Using this</div>
<!-- desc scrollbar -->
<div class="a" style="left:525px;top:133px;width:17px;height:513px;background:#f0f0f0"></div>
<div class="a" style="left:526px;top:167px;width:15px;height:220px;background:#cdcdcd"></div>
<svg class="ic" style="left:528px;top:149px" width="11" height="10" viewBox="0 0 11 10"><path d="M0 6.3L5.4 0.8L11 6.3V9.8L5.4 4.8L0 9.8Z" fill="#606060"/></svg>
<svg class="ic" style="left:528px;top:620px" width="11" height="10" viewBox="0 0 11 10"><path d="M0 0L5.4 5L11 0V3.5L5.4 8.7L0 3.5Z" fill="#606060"/></svg>
<!-- list header -->
<div class="t" style="left:548px;top:113px">Setting</div>
<div class="a" style="left:891px;top:110px;width:1px;height:24px;background:#e5e5e5"></div>
<div class="t" style="left:929px;top:113px">State</div>
<div class="a" style="left:991px;top:110px;width:1px;height:24px;background:#e5e5e5"></div>
<div class="ic" style="left:547px;top:136px"><svg width="13" height="15" viewBox="0 0 13 15"><path d="M0.5 0.5H9L12.5 4V14.5H0.5Z" fill="#fff" stroke="#a3a3a3"/><path d="M0.5 14.5H12.5V4" fill="none" stroke="#6c6c6c"/><path d="M9 0.5V4H12.5" fill="#f2f2f2" stroke="#a0a0a0"/><rect x="3" y="4" width="2" height="2" fill="#111"/><rect x="3" y="7" width="2" height="2" fill="#6c6a94"/><rect x="3" y="10" width="2" height="2" fill="#111"/><rect x="6" y="5" width="4" height="1" fill="#7a78a0"/><rect x="6" y="8" width="4" height="1" fill="#7a78a0"/><rect x="6" y="11" width="4" height="1" fill="#7a78a0"/></svg></div>
<div class="t" style="left:564px;top:135px">Toggle user control over Insider builds</div>
<div class="t" style="left:901px;top:135px">Not configured</div>
<div class="ic" style="left:547px;top:155px"><svg width="13" height="15" viewBox="0 0 13 15"><path d="M0.5 0.5H9L12.5 4V14.5H0.5Z" fill="#fff" stroke="#a3a3a3"/><path d="M0.5 14.5H12.5V4" fill="none" stroke="#6c6c6c"/><path d="M9 0.5V4H12.5" fill="#f2f2f2" stroke="#a0a0a0"/><rect x="3" y="4" width="2" height="2" fill="#111"/><rect x="3" y="7" width="2" height="2" fill="#6c6a94"/><rect x="3" y="10" width="2" height="2" fill="#111"/><rect x="6" y="5" width="4" height="1" fill="#7a78a0"/><rect x="6" y="8" width="4" height="1" fill="#7a78a0"/><rect x="6" y="11" width="4" height="1" fill="#7a78a0"/></svg></div>
<div class="t" style="left:564px;top:154px">Allow commercial data pipeline</div>
<div class="t" style="left:901px;top:154px">Not configured</div>
<div class="ic" style="left:547px;top:174px"><svg width="13" height="15" viewBox="0 0 13 15"><path d="M0.5 0.5H9L12.5 4V14.5H0.5Z" fill="#fff" stroke="#a3a3a3"/><path d="M0.5 14.5H12.5V4" fill="none" stroke="#6c6c6c"/><path d="M9 0.5V4H12.5" fill="#f2f2f2" stroke="#a0a0a0"/><rect x="3" y="4" width="2" height="2" fill="#111"/><rect x="3" y="7" width="2" height="2" fill="#6c6a94"/><rect x="3" y="10" width="2" height="2" fill="#111"/><rect x="6" y="5" width="4" height="1" fill="#7a78a0"/><rect x="6" y="8" width="4" height="1" fill="#7a78a0"/><rect x="6" y="11" width="4" height="1" fill="#7a78a0"/></svg></div>
<div class="t" style="left:564px;top:173px">Allow Desktop Analytics Processing</div>
<div class="t" style="left:901px;top:173px">Not configured</div>
<div class="ic" style="left:547px;top:193px"><svg width="13" height="15" viewBox="0 0 13 15"><path d="M0.5 0.5H9L12.5 4V14.5H0.5Z" fill="#fff" stroke="#a3a3a3"/><path d="M0.5 14.5H12.5V4" fill="none" stroke="#6c6c6c"/><path d="M9 0.5V4H12.5" fill="#f2f2f2" stroke="#a0a0a0"/><rect x="3" y="4" width="2" height="2" fill="#111"/><rect x="3" y="7" width="2" height="2" fill="#6c6a94"/><rect x="3" y="10" width="2" height="2" fill="#111"/><rect x="6" y="5" width="4" height="1" fill="#7a78a0"/><rect x="6" y="8" width="4" height="1" fill="#7a78a0"/><rect x="6" y="11" width="4" height="1" fill="#7a78a0"/></svg></div>
<div class="t" style="left:564px;top:192px">Allow device name to be sent in Windows diagnostic data</div>
<div class="t" style="left:901px;top:192px">Not configured</div>
<div class="hl" style="left:562px;top:210px;width:499px;height:19px"></div>
<div class="ic" style="left:547px;top:212px"><svg width="13" height="15" viewBox="0 0 13 15"><defs><pattern id="dith" width="2" height="2" patternUnits="userSpaceOnUse"><rect width="2" height="2" fill="#1a7ad8"/><rect width="1" height="1" fill="#e8f2fc"/><rect x="1" y="1" width="1" height="1" fill="#e8f2fc"/></pattern></defs><path d="M0 0H9L13 4V15H0Z" fill="url(#dith)"/><rect x="3" y="4" width="2" height="2" fill="#1a3f7a"/><rect x="3" y="10" width="2" height="2" fill="#1a3f7a"/></svg></div>
<div class="t" style="left:564px;top:211px">Allow Diagnostic Data</div>
<div class="t" style="left:901px;top:211px">Not configured</div>
<div class="ic" style="left:547px;top:231px"><svg width="13" height="15" viewBox="0 0 13 15"><path d="M0.5 0.5H9L12.5 4V14.5H0.5Z" fill="#fff" stroke="#a3a3a3"/><path d="M0.5 14.5H12.5V4" fill="none" stroke="#6c6c6c"/><path d="M9 0.5V4H12.5" fill="#f2f2f2" stroke="#a0a0a0"/><rect x="3" y="4" width="2" height="2" fill="#111"/><rect x="3" y="7" width="2" height="2" fill="#6c6a94"/><rect x="3" y="10" width="2" height="2" fill="#111"/><rect x="6" y="5" width="4" height="1" fill="#7a78a0"/><rect x="6" y="8" width="4" height="1" fill="#7a78a0"/><rect x="6" y="11" width="4" height="1" fill="#7a78a0"/></svg></div>
<div class="t" style="left:564px;top:230px">Allow Update Compliance Processing</div>
<div class="t" style="left:901px;top:230px">Not configured</div>
<div class="ic" style="left:547px;top:250px"><svg width="13" height="15" viewBox="0 0 13 15"><path d="M0.5 0.5H9L12.5 4V14.5H0.5Z" fill="#fff" stroke="#a3a3a3"/><path d="M0.5 14.5H12.5V4" fill="none" stroke="#6c6c6c"/><path d="M9 0.5V4H12.5" fill="#f2f2f2" stroke="#a0a0a0"/><rect x="3" y="4" width="2" height="2" fill="#111"/><rect x="3" y="7" width="2" height="2" fill="#6c6a94"/><rect x="3" y="10" width="2" height="2" fill="#111"/><rect x="6" y="5" width="4" height="1" fill="#7a78a0"/><rect x="6" y="8" width="4" height="1" fill="#7a78a0"/><rect x="6" y="11" width="4" height="1" fill="#7a78a0"/></svg></div>
<div class="t" style="left:564px;top:249px">Allow WUfB Cloud Processing</div>
<div class="t" style="left:901px;top:249px">Not configured</div>
<div class="ic" style="left:547px;top:269px"><svg width="13" height="15" viewBox="0 0 13 15"><path d="M0.5 0.5H9L12.5 4V14.5H0.5Z" fill="#fff" stroke="#a3a3a3"/><path d="M0.5 14.5H12.5V4" fill="none" stroke="#6c6c6c"/><path d="M9 0.5V4H12.5" fill="#f2f2f2" stroke="#a0a0a0"/><rect x="3" y="4" width="2" height="2" fill="#111"/><rect x="3" y="7" width="2" height="2" fill="#6c6a94"/><rect x="3" y="10" width="2" height="2" fill="#111"/><rect x="6" y="5" width="4" height="1" fill="#7a78a0"/><rect x="6" y="8" width="4" height="1" fill="#7a78a0"/><rect x="6" y="11" width="4" height="1" fill="#7a78a0"/></svg></div>
<div class="t" style="left:564px;top:268px">Configure the Commercial ID</div>
<div class="t" style="left:901px;top:268px">Not configured</div>
<div class="ic" style="left:547px;top:288px"><svg width="13" height="15" viewBox="0 0 13 15"><path d="M0.5 0.5H9L12.5 4V14.5H0.5Z" fill="#fff" stroke="#a3a3a3"/><path d="M0.5 14.5H12.5V4" fill="none" stroke="#6c6c6c"/><path d="M9 0.5V4H12.5" fill="#f2f2f2" stroke="#a0a0a0"/><rect x="3" y="4" width="2" height="2" fill="#111"/><rect x="3" y="7" width="2" height="2" fill="#6c6a94"/><rect x="3" y="10" width="2" height="2" fill="#111"/><rect x="6" y="5" width="4" height="1" fill="#7a78a0"/><rect x="6" y="8" width="4" height="1" fill="#7a78a0"/><rect x="6" y="11" width="4" height="1" fill="#7a78a0"/></svg></div>
<div class="t" style="left:564px;top:287px">Configure diagnostic data upload endpoint for Desktop Ana...</div>
<div class="t" style="left:901px;top:287px">Not configured</div>
<div class="ic" style="left:547px;top:307px"><svg width="13" height="15" viewBox="0 0 13 15"><path d="M0.5 0.5H9L12.5 4V14.5H0.5Z" fill="#fff" stroke="#a3a3a3"/><path d="M0.5 14.5H12.5V4" fill="none" stroke="#6c6c6c"/><path d="M9 0.5V4H12.5" fill="#f2f2f2" stroke="#a0a0a0"/><rect x="3" y="4" width="2" height="2" fill="#111"/><rect x="3" y="7" width="2" height="2" fill="#6c6a94"/><rect x="3" y="10" width="2" height="2" fill="#111"/><rect x="6" y="5" width="4" height="1" fill="#7a78a0"/><rect x="6" y="8" width="4" height="1" fill="#7a78a0"/><rect x="6" y="11" width="4" height="1" fill="#7a78a0"/></svg></div>
<div class="t" style="left:564px;top:306px">Configure diagnostic data opt-in change notifications</div>
<div class="t" style="left:901px;top:306px">Not configured</div>
<div class="ic" style="left:547px;top:326px"><svg width="13" height="15" viewBox="0 0 13 15"><path d="M0.5 0.5H9L12.5 4V14.5H0.5Z" fill="#fff" stroke="#a3a3a3"/><path d="M0.5 14.5H12.5V4" fill="none" stroke="#6c6c6c"/><path d="M9 0.5V4H12.5" fill="#f2f2f2" stroke="#a0a0a0"/><rect x="3" y="4" width="2" height="2" fill="#111"/><rect x="3" y="7" width="2" height="2" fill="#6c6a94"/><rect x="3" y="10" width="2" height="2" fill="#111"/><rect x="6" y="5" width="4" height="1" fill="#7a78a0"/><rect x="6" y="8" width="4" height="1" fill="#7a78a0"/><rect x="6" y="11" width="4" height="1" fill="#7a78a0"/></svg></div>
<div class="t" style="left:564px;top:325px">Configure diagnostic data opt-in settings user interface</div>
<div class="t" style="left:901px;top:325px">Not configured</div>
<div class="ic" style="left:547px;top:345px"><svg width="13" height="15" viewBox="0 0 13 15"><path d="M0.5 0.5H9L12.5 4V14.5H0.5Z" fill="#fff" stroke="#a3a3a3"/><path d="M0.5 14.5H12.5V4" fill="none" stroke="#6c6c6c"/><path d="M9 0.5V4H12.5" fill="#f2f2f2" stroke="#a0a0a0"/><rect x="3" y="4" width="2" height="2" fill="#111"/><rect x="3" y="7" width="2" height="2" fill="#6c6a94"/><rect x="3" y="10" width="2" height="2" fill="#111"/><rect x="6" y="5" width="4" height="1" fill="#7a78a0"/><rect x="6" y="8" width="4" height="1" fill="#7a78a0"/><rect x="6" y="11" width="4" height="1" fill="#7a78a0"/></svg></div>
<div class="t" style="left:564px;top:344px">Disable deleting diagnostic data</div>
<div class="t" style="left:901px;top:344px">Not configured</div>
<div class="ic" style="left:547px;top:364px"><svg width="13" height="15" viewBox="0 0 13 15"><path d="M0.5 0.5H9L12.5 4V14.5H0.5Z" fill="#fff" stroke="#a3a3a3"/><path d="M0.5 14.5H12.5V4" fill="none" stroke="#6c6c6c"/><path d="M9 0.5V4H12.5" fill="#f2f2f2" stroke="#a0a0a0"/><rect x="3" y="4" width="2" height="2" fill="#111"/><rect x="3" y="7" width="2" height="2" fill="#6c6a94"/><rect x="3" y="10" width="2" height="2" fill="#111"/><rect x="6" y="5" width="4" height="1" fill="#7a78a0"/><rect x="6" y="8" width="4" height="1" fill="#7a78a0"/><rect x="6" y="11" width="4" height="1" fill="#7a78a0"/></svg></div>
<div class="t" style="left:564px;top:363px">Disable diagnostic data viewer</div>
<div class="t" style="left:901px;top:363px">Not configured</div>
<div class="ic" style="left:547px;top:383px"><svg width="13" height="15" viewBox="0 0 13 15"><path d="M0.5 0.5H9L12.5 4V14.5H0.5Z" fill="#fff" stroke="#a3a3a3"/><path d="M0.5 14.5H12.5V4" fill="none" stroke="#6c6c6c"/><path d="M9 0.5V4H12.5" fill="#f2f2f2" stroke="#a0a0a0"/><rect x="3" y="4" width="2" height="2" fill="#111"/><rect x="3" y="7" width="2" height="2" fill="#6c6a94"/><rect x="3" y="10" width="2" height="2" fill="#111"/><rect x="6" y="5" width="4" height="1" fill="#7a78a0"/><rect x="6" y="8" width="4" height="1" fill="#7a78a0"/><rect x="6" y="11" width="4" height="1" fill="#7a78a0"/></svg></div>
<div class="t" style="left:564px;top:382px">Configure Authenticated Proxy usage for the Connected Us...</div>
<div class="t" style="left:901px;top:382px">Not configured</div>
<div class="ic" style="left:547px;top:402px"><svg width="13" height="15" viewBox="0 0 13 15"><path d="M0.5 0.5H9L12.5 4V14.5H0.5Z" fill="#fff" stroke="#a3a3a3"/><path d="M0.5 14.5H12.5V4" fill="none" stroke="#6c6c6c"/><path d="M9 0.5V4H12.5" fill="#f2f2f2" stroke="#a0a0a0"/><rect x="3" y="4" width="2" height="2" fill="#111"/><rect x="3" y="7" width="2" height="2" fill="#6c6a94"/><rect x="3" y="10" width="2" height="2" fill="#111"/><rect x="6" y="5" width="4" height="1" fill="#7a78a0"/><rect x="6" y="8" width="4" height="1" fill="#7a78a0"/><rect x="6" y="11" width="4" height="1" fill="#7a78a0"/></svg></div>
<div class="t" style="left:564px;top:401px">Disable OneSettings Downloads</div>
<div class="t" style="left:901px;top:401px">Not configured</div>
<div class="ic" style="left:547px;top:421px"><svg width="13" height="15" viewBox="0 0 13 15"><path d="M0.5 0.5H9L12.5 4V14.5H0.5Z" fill="#fff" stroke="#a3a3a3"/><path d="M0.5 14.5H12.5V4" fill="none" stroke="#6c6c6c"/><path d="M9 0.5V4H12.5" fill="#f2f2f2" stroke="#a0a0a0"/><rect x="3" y="4" width="2" height="2" fill="#111"/><rect x="3" y="7" width="2" height="2" fill="#6c6a94"/><rect x="3" y="10" width="2" height="2" fill="#111"/><rect x="6" y="5" width="4" height="1" fill="#7a78a0"/><rect x="6" y="8" width="4" height="1" fill="#7a78a0"/><rect x="6" y="11" width="4" height="1" fill="#7a78a0"/></svg></div>
<div class="t" style="left:564px;top:420px">Enable OneSettings Auditing</div>
<div class="t" style="left:901px;top:420px">Not configured</div>
<div class="ic" style="left:547px;top:440px"><svg width="13" height="15" viewBox="0 0 13 15"><path d="M0.5 0.5H9L12.5 4V14.5H0.5Z" fill="#fff" stroke="#a3a3a3"/><path d="M0.5 14.5H12.5V4" fill="none" stroke="#6c6c6c"/><path d="M9 0.5V4H12.5" fill="#f2f2f2" stroke="#a0a0a0"/><rect x="3" y="4" width="2" height="2" fill="#111"/><rect x="3" y="7" width="2" height="2" fill="#6c6a94"/><rect x="3" y="10" width="2" height="2" fill="#111"/><rect x="6" y="5" width="4" height="1" fill="#7a78a0"/><rect x="6" y="8" width="4" height="1" fill="#7a78a0"/><rect x="6" y="11" width="4" height="1" fill="#7a78a0"/></svg></div>
<div class="t" style="left:564px;top:439px">Limit Diagnostic Log Collection</div>
<div class="t" style="left:901px;top:439px">Not configured</div>
<div class="ic" style="left:547px;top:459px"><svg width="13" height="15" viewBox="0 0 13 15"><path d="M0.5 0.5H9L12.5 4V14.5H0.5Z" fill="#fff" stroke="#a3a3a3"/><path d="M0.5 14.5H12.5V4" fill="none" stroke="#6c6c6c"/><path d="M9 0.5V4H12.5" fill="#f2f2f2" stroke="#a0a0a0"/><rect x="3" y="4" width="2" height="2" fill="#111"/><rect x="3" y="7" width="2" height="2" fill="#6c6a94"/><rect x="3" y="10" width="2" height="2" fill="#111"/><rect x="6" y="5" width="4" height="1" fill="#7a78a0"/><rect x="6" y="8" width="4" height="1" fill="#7a78a0"/><rect x="6" y="11" width="4" height="1" fill="#7a78a0"/></svg></div>
<div class="t" style="left:564px;top:458px">Limit Dump Collection</div>
<div class="t" style="left:901px;top:458px">Not configured</div>
<div class="ic" style="left:547px;top:478px"><svg width="13" height="15" viewBox="0 0 13 15"><path d="M0.5 0.5H9L12.5 4V14.5H0.5Z" fill="#fff" stroke="#a3a3a3"/><path d="M0.5 14.5H12.5V4" fill="none" stroke="#6c6c6c"/><path d="M9 0.5V4H12.5" fill="#f2f2f2" stroke="#a0a0a0"/><rect x="3" y="4" width="2" height="2" fill="#111"/><rect x="3" y="7" width="2" height="2" fill="#6c6a94"/><rect x="3" y="10" width="2" height="2" fill="#111"/><rect x="6" y="5" width="4" height="1" fill="#7a78a0"/><rect x="6" y="8" width="4" height="1" fill="#7a78a0"/><rect x="6" y="11" width="4" height="1" fill="#7a78a0"/></svg></div>
<div class="t" style="left:564px;top:477px">Limit optional diagnostic data for Desktop Analytics</div>
<div class="t" style="left:901px;top:477px">Not configured</div>
<div class="ic" style="left:547px;top:497px"><svg width="13" height="15" viewBox="0 0 13 15"><path d="M0.5 0.5H9L12.5 4V14.5H0.5Z" fill="#fff" stroke="#a3a3a3"/><path d="M0.5 14.5H12.5V4" fill="none" stroke="#6c6c6c"/><path d="M9 0.5V4H12.5" fill="#f2f2f2" stroke="#a0a0a0"/><rect x="3" y="4" width="2" height="2" fill="#111"/><rect x="3" y="7" width="2" height="2" fill="#6c6a94"/><rect x="3" y="10" width="2" height="2" fill="#111"/><rect x="6" y="5" width="4" height="1" fill="#7a78a0"/><rect x="6" y="8" width="4" height="1" fill="#7a78a0"/><rect x="6" y="11" width="4" height="1" fill="#7a78a0"/></svg></div>
<div class="t" style="left:564px;top:496px">Configure Connected User Experiences and Telemetry</div>
<div class="t" style="left:901px;top:496px">Not configured</div>
<div class="ic" style="left:547px;top:516px"><svg width="13" height="15" viewBox="0 0 13 15"><path d="M0.5 0.5H9L12.5 4V14.5H0.5Z" fill="#fff" stroke="#a3a3a3"/><path d="M0.5 14.5H12.5V4" fill="none" stroke="#6c6c6c"/><path d="M9 0.5V4H12.5" fill="#f2f2f2" stroke="#a0a0a0"/><rect x="3" y="4" width="2" height="2" fill="#111"/><rect x="3" y="7" width="2" height="2" fill="#6c6a94"/><rect x="3" y="10" width="2" height="2" fill="#111"/><rect x="6" y="5" width="4" height="1" fill="#7a78a0"/><rect x="6" y="8" width="4" height="1" fill="#7a78a0"/><rect x="6" y="11" width="4" height="1" fill="#7a78a0"/></svg></div>
<div class="t" style="left:564px;top:515px">Do not show feedback notifications</div>
<div class="t" style="left:901px;top:515px">Not configured</div>
<div class="ic" style="left:547px;top:535px"><svg width="13" height="15" viewBox="0 0 13 15"><path d="M0.5 0.5H9L12.5 4V14.5H0.5Z" fill="#fff" stroke="#a3a3a3"/><path d="M0.5 14.5H12.5V4" fill="none" stroke="#6c6c6c"/><path d="M9 0.5V4H12.5" fill="#f2f2f2" stroke="#a0a0a0"/><rect x="3" y="4" width="2" height="2" fill="#111"/><rect x="3" y="7" width="2" height="2" fill="#6c6a94"/><rect x="3" y="10" width="2" height="2" fill="#111"/><rect x="6" y="5" width="4" height="1" fill="#7a78a0"/><rect x="6" y="8" width="4" height="1" fill="#7a78a0"/><rect x="6" y="11" width="4" height="1" fill="#7a78a0"/></svg></div>
<div class="t" style="left:564px;top:534px">Configure collection of browsing data for Desktop Analytics</div>
<div class="t" style="left:901px;top:534px">Not configured</div>
<!-- list h scrollbar -->
<div class="a" style="left:542px;top:630px;width:519px;height:16px;background:#f0f0f0"></div>
<div class="a" style="left:559px;top:637px;width:387px;height:2px;background:#858585"></div>
<!-- tab strip -->
<div class="a" style="left:325px;top:647px;width:738px;height:20px;background:#f0f0f0"></div>
<div class="a" style="left:330px;top:646px;width:195px;height:1px;background:#e3e3e3"></div><div class="a" style="left:400px;top:648px;width:663px;height:1px;background:#646464"></div>

<svg class="ic" style="left:328px;top:646px" width="140" height="22" viewBox="0 0 140 22"><path d="M64 2.5L73.5 20.5H127L135 2.5" fill="#f0f0f0" stroke="#5f5f5f" stroke-width="1"/><path d="M1 1H72V2H1Z" fill="#fff"/><path d="M0.5 2L9.5 20.5H64L72.5 2Z" fill="#fff"/><path d="M0.5 2.3L9.5 20.5H64L72.5 2.3" fill="none" stroke="#5f5f5f" stroke-width="1"/></svg>

<div class="t" style="left:341px;top:649px;letter-spacing:-0.45px">Extended</div>
<div class="t" style="left:404px;top:649px;letter-spacing:-0.2px">Standard</div>
<!-- status bar -->
<div class="a" style="left:1px;top:667px;width:1062px;height:1px;background:#d9d9d9"></div>
<div class="t" style="left:3px;top:671px">22 setting(s)</div>
<div class="a" style="left:842px;top:669px;width:1px;height:21px;background:#d9d9d9"></div>
<div class="a" style="left:975px;top:669px;width:1px;height:21px;background:#d9d9d9"></div><div class="a" style="left:1060px;top:669px;width:1px;height:17px;background:#d9d9d9"></div>
</body></html>
